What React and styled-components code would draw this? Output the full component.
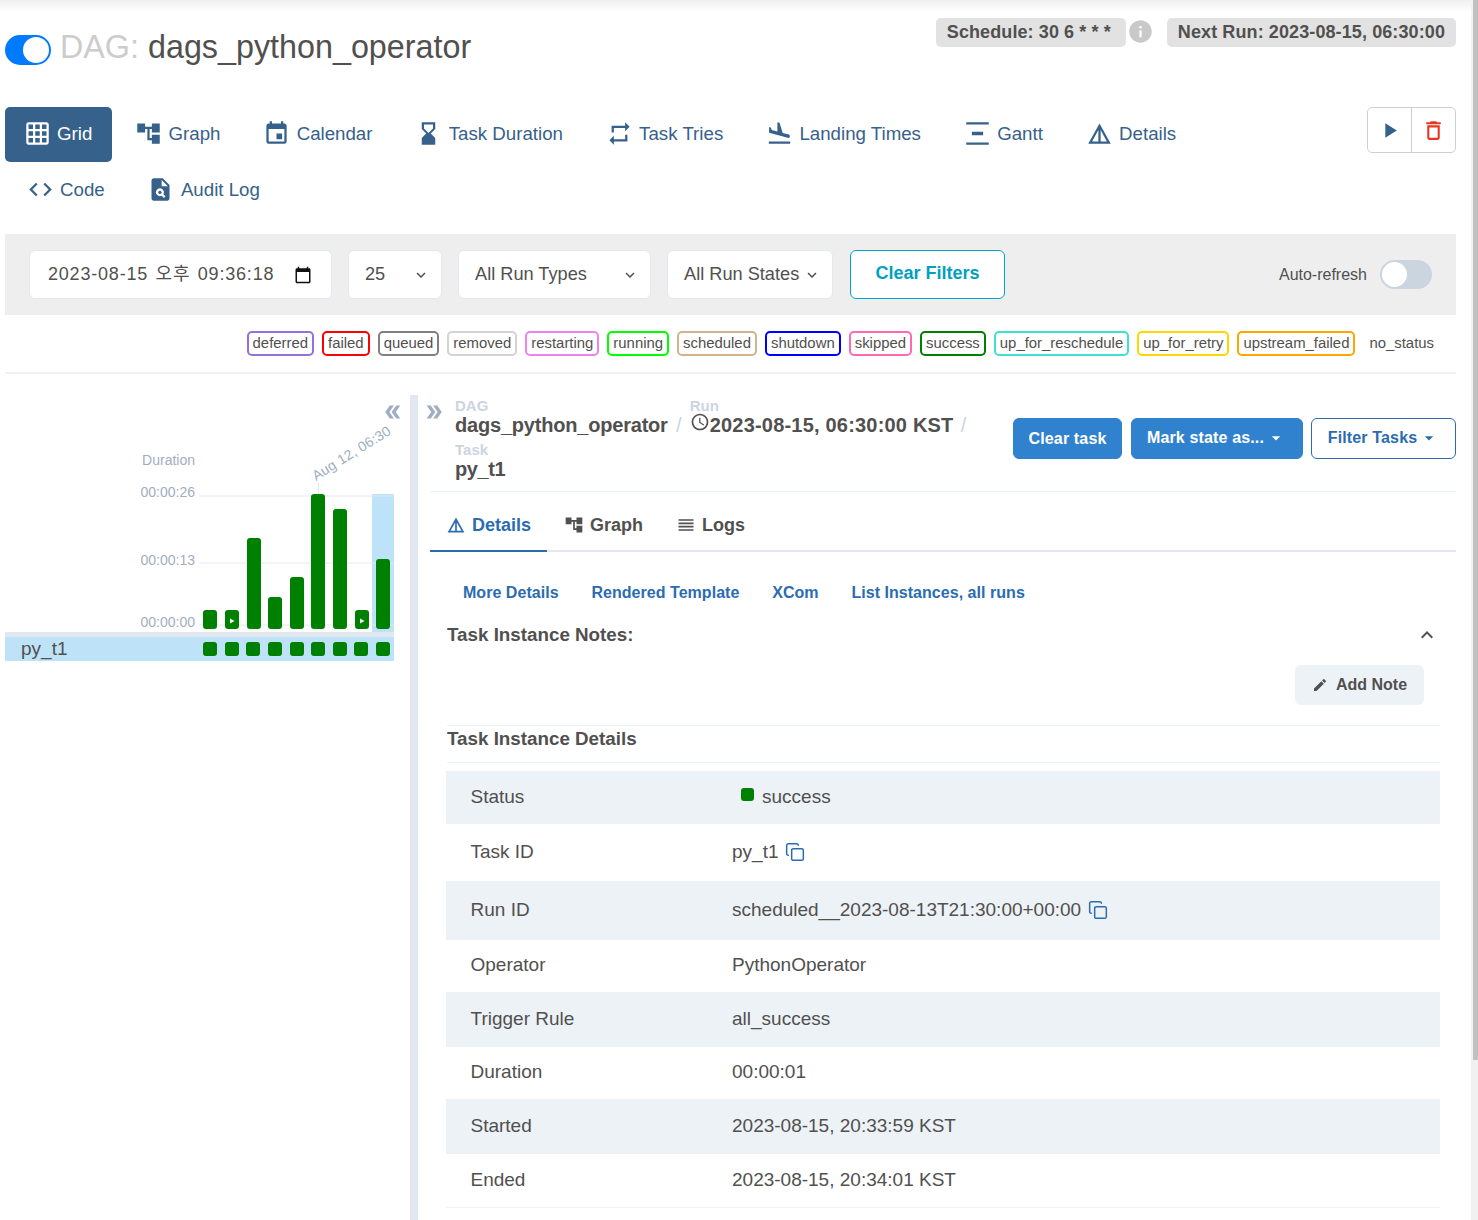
import React from 'react';
import styled, { createGlobalStyle } from 'styled-components';
import {
  MdGridOn, MdAccountTree, MdEvent, MdHourglassBottom, MdRepeat, MdFlightLand,
  MdVerticalDistribute, MdDetails, MdCode, MdPlagiarism, MdPlayArrow, MdDeleteOutline,
  MdInfo, MdDoubleArrow, MdReorder, MdEdit, MdExpandLess, MdExpandMore, MdArrowDropDown,
  MdOutlineSchedule, MdCalendarToday,
} from 'react-icons/md';
import { Copy } from 'lucide-react';

const GlobalStyle = createGlobalStyle`
  html, body {
    margin: 0;
    padding: 0;
    height: 1220px;
    overflow: hidden;
    background: #fff;
    color: #51504f;
    font-family: "Liberation Sans", Arial, sans-serif;
  }
  * { box-sizing: border-box; }
`;

const Page = styled.div`
  position: relative;
  width: 1478px;
  height: 1220px;
  padding: 0 22px 0 5px;
  overflow: hidden;
`;

const TopShadow = styled.div`
  position: absolute;
  top: 0;
  left: 0;
  right: 0;
  height: 12px;
  background: linear-gradient(#efefef, #fff);
`;

const ScrollTrack = styled.div`
  position: absolute;
  top: 0;
  right: 0;
  bottom: 0;
  width: 7px;
  background: #f1f1f1;
  &::after {
    content: '';
    position: absolute;
    top: 0;
    right: 0;
    width: 5px;
    height: 1060px;
    background: #c1c1c1;
  }
`;

const Header = styled.header`
  position: relative;
  height: 107px;
  display: flex;
  justify-content: space-between;
`;

const TitleWrap = styled.div`
  display: flex;
  align-items: center;
  height: 30px;
  margin-top: 35px;
`;

const PauseToggle = styled.span`
  width: 46px;
  height: 30px;
  border-radius: 15px;
  background: #007bff;
  position: relative;
  margin-right: 9px;
  &::after {
    content: '';
    position: absolute;
    right: 2px;
    top: 2px;
    width: 26px;
    height: 26px;
    border-radius: 50%;
    background: #fff;
  }
`;

const Title = styled.h1`
  margin: 0 0 6px;
  font-size: 32.3px;
  line-height: 30px;
  font-weight: 400;
  color: #51504f;
  span {
    color: #cccccc;
    margin-right: 9px;
  }
`;

const Badges = styled.div`
  display: flex;
  align-items: flex-start;
  margin-top: 18px;
`;

const Badge = styled.span`
  height: 29px;
  line-height: 28px;
  padding: 0 ${p => p.$padRight || 11}px 0 11px;
  background: #e2e2e2;
  border-radius: 5px;
  font-size: 18px;
  font-weight: 700;
  letter-spacing: 0.1px;
  color: #51504f;
`;

const InfoIcon = styled(MdInfo)`
  color: #c9c9c9;
  font-size: 27px;
  margin: 0 13px 0 1px;
`;

const NavArea = styled.div`
  display: flex;
  justify-content: space-between;
  align-items: flex-start;
`;

const NavList = styled.nav`
  width: 1260px;
  display: flex;
  flex-wrap: wrap;
  align-items: center;
`;

const NavItem = styled.a`
  height: 55px;
  display: flex;
  align-items: center;
  gap: 6.5px;
  padding: 0 20px;
  margin-right: 4.2px;
  margin-left: ${p => p.$indent || 0}px;
  border-radius: 5px;
  font-size: 18.7px;
  color: ${p => (p.$active ? '#fff' : '#36618a')};
  background: ${p => (p.$active ? '#36618a' : 'transparent')};
  &:nth-child(-n + 8) { padding-bottom: 2px; }
  svg { width: 27px; height: 27px; margin-left: -1.5px; flex: none; }
`;

const ActionGroup = styled.div`
  width: 89px;
  display: flex;
  height: 46px;
  border: 1px solid #cfcfcf;
  border-radius: 5px;
`;

const ActionButton = styled.span`
  flex: 1;
  display: flex;
  align-items: center;
  justify-content: center;
  font-size: 25px;
  color: ${p => p.$color};
  & + & { border-left: 1px solid #cfcfcf; }
`;

const FilterBar = styled.section`
  height: 81px;
  margin-top: 17px;
  padding: 16px 24px;
  background: #eeeeee;
  display: flex;
  align-items: flex-start;
  gap: 16px;
`;

const Field = styled.div`
  width: ${p => p.$width}px;
  height: 49px;
  flex: none;
  padding: 0 ${p => p.$padRight || 11}px 0 ${p => p.$padLeft || 16}px;
  background: #fff;
  border: 1px solid #e2e8f0;
  border-radius: 6px;
  display: flex;
  align-items: center;
  justify-content: space-between;
  font-size: 18.2px;
  color: #51504f;
  svg { flex: none; }
`;

const DateText = styled.span`
  font-family: "Liberation Sans", "Noto Sans CJK KR", sans-serif;
  font-size: 18px;
  letter-spacing: 0.8px;
  word-spacing: 1.7px;
  margin-top: -5px;
`;

const ClearFilters = styled.button`
  width: 155px;
  height: 49px;
  margin-left: 1px;
  padding: 0 0 2px;
  background: #fff;
  border: 1px solid #00a7c4;
  border-radius: 6px;
  font: 700 18px "Liberation Sans", Arial, sans-serif;
  color: #00a0c0;
`;

const AutoRefresh = styled.label`
  margin-left: auto;
  height: 49px;
  display: flex;
  align-items: center;
  gap: 13px;
  font-size: 16px;
  color: #51504f;
`;

const SwitchTrack = styled.span`
  width: 52px;
  height: 29px;
  padding: 2px;
  border-radius: 15px;
  background: #cbd5e0;
  display: block;
  &::after {
    content: '';
    display: block;
    width: 25px;
    height: 25px;
    border-radius: 50%;
    background: #fff;
  }
`;

const Legend = styled.div`
  margin-top: 16px;
  padding: 0 16px 16px 0;
  border-bottom: 2px solid #edf2f7;
  display: flex;
  justify-content: flex-end;
  gap: 8px;
`;

const StateTag = styled.span`
  height: 25px;
  line-height: 20px;
  padding: 0 4px;
  border: 2px solid ${p => p.$color || 'transparent'};
  border-radius: 5px;
  font-size: 14.9px;
  color: #51504f;
`;

const Main = styled.main`
  margin-top: 21px;
  height: 825px;
  display: flex;
`;

const GridPanel = styled.section`
  position: relative;
  width: 405px;
  flex: none;
`;

const CollapseIcon = styled(MdDoubleArrow)`
  position: absolute;
  top: 6px;
  right: 6px;
  font-size: 22px;
  color: #a0aec0;
  transform: rotate(180deg);
`;

const ExpandIcon = styled(MdDoubleArrow)`
  position: absolute;
  top: 6px;
  left: 5px;
  font-size: 22px;
  color: #a0aec0;
`;

const DurationChart = styled.svg`
  display: block;
  width: 389px;
  height: 237px;
  text {
    font-family: "Liberation Sans", Arial, sans-serif;
    font-size: 14px;
    fill: #a0aec0;
  }
`;

const ChartRule = styled.div`
  width: 389px;
  height: 5px;
  background: #e2e8f0;
`;

const TaskRow = styled.div`
  width: 389px;
  height: 24px;
  padding: 0 4px 0 16px;
  background: #bee3f8;
  display: flex;
  align-items: center;
  justify-content: space-between;
  font-size: 19px;
  color: #51504f;
`;

const TaskSquares = styled.div`
  display: flex;
  gap: 7.6px;
`;

const TaskSquare = styled.span`
  width: 14px;
  height: 14px;
  border-radius: 3px;
  background: green;
`;

const Splitter = styled.div`
  width: 8px;
  flex: none;
  background: #e2e8f0;
`;

const DetailPanel = styled.section`
  position: relative;
  flex: 1;
  min-width: 0;
  padding-left: 12px;
`;

const DetailHeader = styled.div`
  height: 97px;
  border-bottom: 1px solid #edf2f7;
  display: flex;
  justify-content: space-between;
  align-items: flex-start;
`;

const Breadcrumb = styled.div`
  width: 560px;
  padding: 3px 0 0 25px;
  display: flex;
  flex-wrap: wrap;
  align-content: flex-start;
`;

const Crumb = styled.div`
  height: 44px;
`;

const CrumbLabel = styled.div`
  font-size: 15px;
  line-height: 16px;
  font-weight: 700;
  color: #cbd5e0;
`;

const CrumbValue = styled.div`
  display: flex;
  align-items: center;
  font-size: 20px;
  line-height: 22px;
  font-weight: 700;
  letter-spacing: ${p => p.$spacing || 0}px;
  color: #51504f;
  svg { font-size: 20px; margin-top: -6px; }
`;

const CrumbSep = styled.span`
  width: ${p => p.$width}px;
  padding-top: 16px;
  text-align: center;
  font-size: 20px;
  line-height: 22px;
  color: #cbd5e0;
`;

const HeaderButtons = styled.div`
  margin-top: 23px;
  display: flex;
  gap: 8.5px;
`;

const SolidButton = styled.button`
  width: ${p => p.$width}px;
  height: 41px;
  padding: 0 0 ${p => (p.$caret ? 2 : 0)}px;
  display: flex;
  align-items: center;
  justify-content: center;
  background: ${p => (p.$outline ? '#fff' : '#3182ce')};
  border: 1px solid ${p => (p.$outline ? '#2b6cb0' : '#3182ce')};
  border-radius: 6px;
  font: 700 16px "Liberation Sans", Arial, sans-serif;
  letter-spacing: 0.15px;
  color: ${p => (p.$outline ? '#2b6cb0' : '#fff')};
  svg { font-size: 20px; margin-left: 2px; }
`;

const Tabs = styled.div`
  height: 60px;
  border-bottom: 2px solid #e2e8f0;
  display: flex;
`;

const Tab = styled.div`
  height: 60px;
  padding: 8px 16px 0;
  margin-right: 1px;
  display: flex;
  align-items: center;
  gap: 6px;
  font-size: 18px;
  font-weight: 700;
  color: ${p => (p.$active ? '#2b6cb0' : '#51504f')};
  border-bottom: 2px solid ${p => (p.$active ? '#2b6cb0' : 'transparent')};
  svg { font-size: 20px; width: 20px; flex: none; }
`;

const Content = styled.div`
  padding: 0 16px 0 17px;
`;

const LinkRow = styled.div`
  height: 60px;
  padding: 22px 0 0 16px;
  display: flex;
  gap: 32.8px;
  align-items: center;
`;

const DetailLink = styled.a`
  font-size: 16px;
  font-weight: 700;
  letter-spacing: 0.04px;
  color: #2b6cb0;
`;

const NotesHeading = styled.div`
  height: 46px;
  padding-right: 1px;
  display: flex;
  align-items: center;
  justify-content: space-between;
  font-size: 18.8px;
  font-weight: 700;
  color: #51504f;
  svg { font-size: 24px; }
`;

const NotesAction = styled.div`
  height: 67px;
  padding: 7px 16px 0 0;
  display: flex;
  justify-content: flex-end;
  align-items: flex-start;
`;

const AddNote = styled.button`
  width: 129px;
  height: 40px;
  display: flex;
  align-items: center;
  justify-content: center;
  gap: 8px;
  background: #edf2f7;
  border: 0;
  border-radius: 6px;
  font: 700 16px "Liberation Sans", Arial, sans-serif;
  color: #51504f;
  svg { font-size: 16px; }
`;

const SectionTitle = styled.div`
  height: 38px;
  line-height: 26px;
  border-top: 1px solid #edf2f7;
  border-bottom: 1px solid #edf2f7;
  font-size: 18.8px;
  font-weight: 700;
  color: #51504f;
`;

const DetailTable = styled.div`
  margin: 8px 0 0 -1px;
  border-bottom: 1px solid #edf2f7;
`;

const DetailRow = styled.div`
  height: ${p => p.$height}px;
  padding-bottom: 2px;
  display: flex;
  align-items: center;
  background: ${p => (p.$striped ? '#edf2f7' : '#fff')};
  font-size: 19px;
  color: #51504f;
`;

const RowLabel = styled.div`
  width: 286px;
  flex: none;
  padding-left: 24.5px;
`;

const RowValue = styled.div`
  display: flex;
  align-items: center;
  gap: 6.5px;
`;

const StatusDot = styled.span`
  width: 13px;
  height: 13px;
  margin: -5px 1.5px 0 9px;
  border-radius: 3px;
  background: green;
`;

const CopyIcon = styled(Copy)`
  width: 20px;
  height: 20px;
  color: #2b6cb0;
  stroke-width: 1.8;
`;

const navRows = [
  { label: 'Grid', Icon: MdGridOn, active: true },
  { label: 'Graph', Icon: MdAccountTree },
  { label: 'Calendar', Icon: MdEvent },
  { label: 'Task Duration', Icon: MdHourglassBottom },
  { label: 'Task Tries', Icon: MdRepeat },
  { label: 'Landing Times', Icon: MdFlightLand },
  { label: 'Gantt', Icon: MdVerticalDistribute },
  { label: 'Details', Icon: MdDetails },
  { label: 'Code', Icon: MdCode, indent: 3 },
  { label: 'Audit Log', Icon: MdPlagiarism },
];

const states = [
  ['deferred', 'mediumpurple'],
  ['failed', 'red'],
  ['queued', 'gray'],
  ['removed', 'lightgrey'],
  ['restarting', 'violet'],
  ['running', 'lime'],
  ['scheduled', 'tan'],
  ['shutdown', 'blue'],
  ['skipped', 'hotpink'],
  ['success', 'green'],
  ['up_for_reschedule', 'turquoise'],
  ['up_for_retry', 'gold'],
  ['upstream_failed', 'orange'],
  ['no_status', null],
];

const bars = [
  { x: 203, top: 610 },
  { x: 225, top: 610, play: true },
  { x: 247, top: 538 },
  { x: 268, top: 597 },
  { x: 290, top: 577 },
  { x: 311, top: 494 },
  { x: 333, top: 509 },
  { x: 355, top: 610, play: true },
  { x: 376, top: 559 },
];

const ticks = [
  { label: '00:00:26', y: 496, textY: 497 },
  { label: '00:00:13', y: 563, textY: 565 },
  { label: '00:00:00', y: 625, textY: 627 },
];

const details = [
  { label: 'Status', height: 53, status: true, value: 'success' },
  { label: 'Task ID', height: 57, value: 'py_t1', copy: true },
  { label: 'Run ID', height: 59, value: 'scheduled__2023-08-13T21:30:00+00:00', copy: true },
  { label: 'Operator', height: 52, value: 'PythonOperator' },
  { label: 'Trigger Rule', height: 55, value: 'all_success' },
  { label: 'Duration', height: 52, value: '00:00:01' },
  { label: 'Started', height: 55, value: '2023-08-15, 20:33:59 KST' },
  { label: 'Ended', height: 53, value: '2023-08-15, 20:34:01 KST' },
];

const Chart = () => (
  <DurationChart viewBox="5 395 389 237">
    <rect x="372" y="494" width="22" height="138" fill="#bee3f8" />
    {ticks.map(t => (
      <g key={t.label}>
        <line x1="199" x2="394" y1={t.y} y2={t.y} stroke="#e2e8f0" />
        <text x="195" y={t.textY} textAnchor="end">{t.label}</text>
      </g>
    ))}
    <text x="195" y="465" textAnchor="end">Duration</text>
    <line x1="318.5" x2="318.5" y1="483" y2="494" stroke="#e2e8f0" />
    <text x="316" y="481" letterSpacing="0.2" transform="rotate(-32 316 481)">Aug 12, 06:30</text>
    {bars.map(b => (
      <g key={b.x}>
        <rect x={b.x} y={b.top} width="14" height={629 - b.top} rx="3" fill="green" />
        {b.play && <path d={`M${b.x + 5} 618.5v5l4.5-2.5z`} fill="#fff" />}
      </g>
    ))}
  </DurationChart>
);

const App = () => (
  <Page>
    <GlobalStyle />
    <TopShadow />
    <ScrollTrack />
    <Header>
      <TitleWrap>
        <PauseToggle />
        <Title><span>DAG:</span>dags_python_operator</Title>
      </TitleWrap>
      <Badges>
        <Badge $padRight={15}>Schedule: 30 6 * * *</Badge>
        <InfoIcon />
        <Badge>Next Run: 2023-08-15, 06:30:00</Badge>
      </Badges>
    </Header>

    <NavArea>
      <NavList>
        {navRows.map(({ label, Icon, active, indent }) => (
          <NavItem key={label} $active={active} $indent={indent}>
            <Icon />
            {label}
          </NavItem>
        ))}
      </NavList>
      <ActionGroup>
        <ActionButton $color="#36618a"><MdPlayArrow /></ActionButton>
        <ActionButton $color="#e43921"><MdDeleteOutline /></ActionButton>
      </ActionGroup>
    </NavArea>

    <FilterBar>
      <Field $width={303} $padLeft={18} $padRight={19}>
        <DateText>2023-08-15 오후 09:36:18</DateText>
        <MdCalendarToday size={18} color="#111" />
      </Field>
      <Field $width={94}>25<MdExpandMore size={18} /></Field>
      <Field $width={193}>All Run Types<MdExpandMore size={18} /></Field>
      <Field $width={166}>All Run States<MdExpandMore size={18} /></Field>
      <ClearFilters>Clear Filters</ClearFilters>
      <AutoRefresh>
        Auto-refresh
        <SwitchTrack />
      </AutoRefresh>
    </FilterBar>

    <Legend>
      {states.map(([name, color]) => (
        <StateTag key={name} $color={color}>{name}</StateTag>
      ))}
    </Legend>

    <Main>
      <GridPanel>
        <CollapseIcon />
        <Chart />
        <ChartRule />
        <TaskRow>
          py_t1
          <TaskSquares>
            {bars.map(b => <TaskSquare key={b.x} />)}
          </TaskSquares>
        </TaskRow>
      </GridPanel>
      <Splitter />
      <DetailPanel>
        <ExpandIcon />
        <DetailHeader>
          <Breadcrumb>
            <Crumb>
              <CrumbLabel>DAG</CrumbLabel>
              <CrumbValue $spacing={-0.2}>dags_python_operator</CrumbValue>
            </Crumb>
            <CrumbSep $width={22}>/</CrumbSep>
            <Crumb>
              <CrumbLabel>Run</CrumbLabel>
              <CrumbValue $spacing={0.2}><MdOutlineSchedule />2023-08-15, 06:30:00 KST</CrumbValue>
            </Crumb>
            <CrumbSep $width={20}>/</CrumbSep>
            <Crumb>
              <CrumbLabel>Task</CrumbLabel>
              <CrumbValue $spacing={-0.4}>py_t1</CrumbValue>
            </Crumb>
          </Breadcrumb>
          <HeaderButtons>
            <SolidButton $width={109}>Clear task</SolidButton>
            <SolidButton $width={172} $caret>Mark state as...<MdArrowDropDown /></SolidButton>
            <SolidButton $width={145} $caret $outline>Filter Tasks<MdArrowDropDown /></SolidButton>
          </HeaderButtons>
        </DetailHeader>

        <Tabs>
          <Tab $active><MdDetails />Details</Tab>
          <Tab><MdAccountTree />Graph</Tab>
          <Tab><MdReorder />Logs</Tab>
        </Tabs>

        <Content>
          <LinkRow>
            <DetailLink>More Details</DetailLink>
            <DetailLink>Rendered Template</DetailLink>
            <DetailLink>XCom</DetailLink>
            <DetailLink>List Instances, all runs</DetailLink>
          </LinkRow>
          <NotesHeading>Task Instance Notes:<MdExpandLess /></NotesHeading>
          <NotesAction>
            <AddNote><MdEdit />Add Note</AddNote>
          </NotesAction>
          <SectionTitle>Task Instance Details</SectionTitle>
          <DetailTable>
            {details.map((row, i) => (
              <DetailRow key={row.label} $height={row.height} $striped={i % 2 === 0}>
                <RowLabel>{row.label}</RowLabel>
                <RowValue>
                  {row.status && <StatusDot />}
                  {row.value}
                  {row.copy && <CopyIcon />}
                </RowValue>
              </DetailRow>
            ))}
          </DetailTable>
        </Content>
      </DetailPanel>
    </Main>
  </Page>
);

export default App;
